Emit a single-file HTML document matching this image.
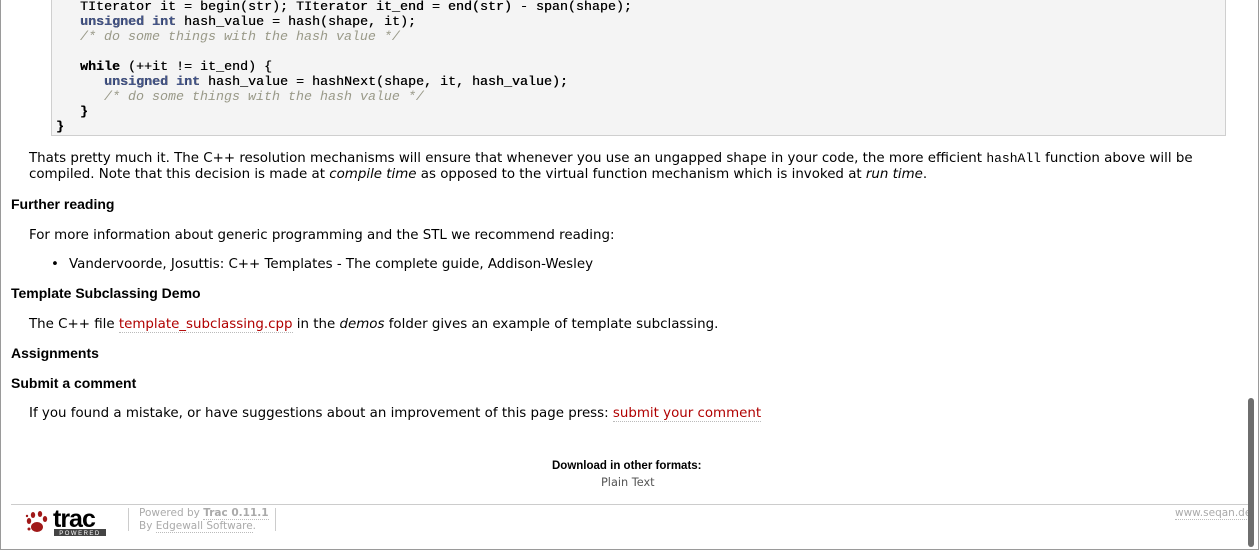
<!DOCTYPE html>
<html><head><meta charset="utf-8"><style>
html,body{margin:0;padding:0;background:#fff;}
body{width:1259px;height:551px;position:relative;overflow:hidden;font-family:"DejaVu Sans","Liberation Sans",sans-serif;font-size:13.4px;color:#000;}
.frame{position:absolute;left:0;top:-2px;width:1257px;height:551px;border:1px solid #9a9a9a;border-top:none;}
.code{position:absolute;left:51px;top:-2px;width:1173px;height:137px;background:#f4f4f4;border:1px solid #cfcfcf;border-top:none;}
pre{position:absolute;left:56px;top:0px;margin:0;font-family:"Liberation Mono",monospace;font-size:13.33px;line-height:15px;color:#000;text-shadow:0.3px 0 0 #000;}
.k{font-weight:bold;}
.t{color:#445588;font-weight:bold;}
.c{color:#999988;font-style:italic;text-shadow:none;}
.a{position:absolute;white-space:nowrap;}
h3{position:absolute;margin:0;left:11px;font-family:"Liberation Sans",Arial,sans-serif;font-size:14px;font-weight:bold;white-space:nowrap;}
a{color:#b00000;text-decoration:none;border-bottom:1px dotted #bbb;}
code{font-family:"Liberation Mono",monospace;font-size:13px;}
.ft{position:absolute;font-size:10.5px;color:#aaa;white-space:nowrap;}
.ft a{color:#aaa;}
</style></head><body>
<div class="frame"></div>
<div class="code"></div>
<pre>   TIterator it = begin(str); TIterator it_end = end(str) - span(shape);
   <span class="t">unsigned</span> <span class="t">int</span> hash_value = hash(shape, it);
   <span class="c">/* do some things with the hash value */</span>

   <span class="k">while</span> (++it != it_end) {
      <span class="t">unsigned</span> <span class="t">int</span> hash_value = hashNext(shape, it, hash_value);
      <span class="c">/* do some things with the hash value */</span>
   <span class="k">}</span>
<span class="k">}</span></pre>

<div class="a" style="left:29px;top:151px;line-height:16px;">Thats pretty much it. The C++ resolution mechanisms will ensure that whenever you use an ungapped shape in your code, the more efficient <code>hashAll</code> function above will be<br>compiled. Note that this decision is made at <i>compile time</i> as opposed to the virtual function mechanism which is invoked at <i>run time</i>.</div>
<h3 style="top:196px;">Further reading</h3>
<div class="a" style="left:29px;top:228px;">For more information about generic programming and the STL we recommend reading:</div>
<div class="a" style="left:51px;top:257px;">•</div>
<div class="a" style="left:69px;top:257px;">Vandervoorde, Josuttis: C++ Templates - The complete guide, Addison-Wesley</div>
<h3 style="top:285px;">Template Subclassing Demo</h3>
<div class="a" style="left:29px;top:317px;">The C++ file <a>template_subclassing.cpp</a> in the <i>demos</i> folder gives an example of template subclassing.</div>
<h3 style="top:345px;">Assignments</h3>
<h3 style="top:375px;">Submit a comment</h3>
<div class="a" style="left:29px;top:406px;">If you found a mistake, or have suggestions about an improvement of this page press: <a>submit your comment</a></div>
<div class="a" style="left:552px;top:460px;font-family:'Liberation Sans',Arial,sans-serif;font-weight:bold;font-size:11.5px;">Download in other formats:</div>
<div class="a" style="left:601px;top:476px;font-size:11.3px;color:#555;">Plain Text</div>

<div style="position:absolute;left:11px;top:504px;width:1237px;height:1px;background:#ccc;"></div>
<svg style="position:absolute;left:25px;top:507px" width="85" height="30" viewBox="0 0 85 30">
<g fill="#a01818"><ellipse cx="12" cy="20" rx="6" ry="5"/><ellipse cx="4" cy="14" rx="2.2" ry="3"/><ellipse cx="8" cy="8" rx="2.2" ry="3"/><ellipse cx="15" cy="7" rx="2.2" ry="3"/><ellipse cx="20" cy="12" rx="2.2" ry="3"/><circle cx="4" cy="22" r="1.5"/><circle cx="2" cy="9" r="1.2"/></g>
<text x="28" y="20" font-family="Liberation Sans,Arial,sans-serif" font-weight="bold" font-size="25" letter-spacing="-1" fill="#000">trac</text>
<rect x="29" y="22" width="52" height="7" fill="#444"/>
<text x="55" y="28" text-anchor="middle" font-family="Liberation Sans,sans-serif" font-size="6" fill="#fff" letter-spacing="1.5">POWERED</text>
</svg>
<div style="position:absolute;left:128px;top:508px;width:1px;height:23px;background:#ccc;"></div>
<div style="position:absolute;left:275px;top:508px;width:1px;height:23px;background:#ccc;"></div>
<div class="ft" style="left:139px;top:507px;line-height:13px;">Powered by <a style="font-weight:bold;">Trac 0.11.1</a><br>By <a>Edgewall Software</a>.</div>
<div class="ft" style="left:1175px;top:507px;"><a>www.seqan.de</a></div>
<div style="position:absolute;left:1248px;top:398px;width:6px;height:149px;border-radius:3px;background:#6e6e6e;"></div>
</body></html>
